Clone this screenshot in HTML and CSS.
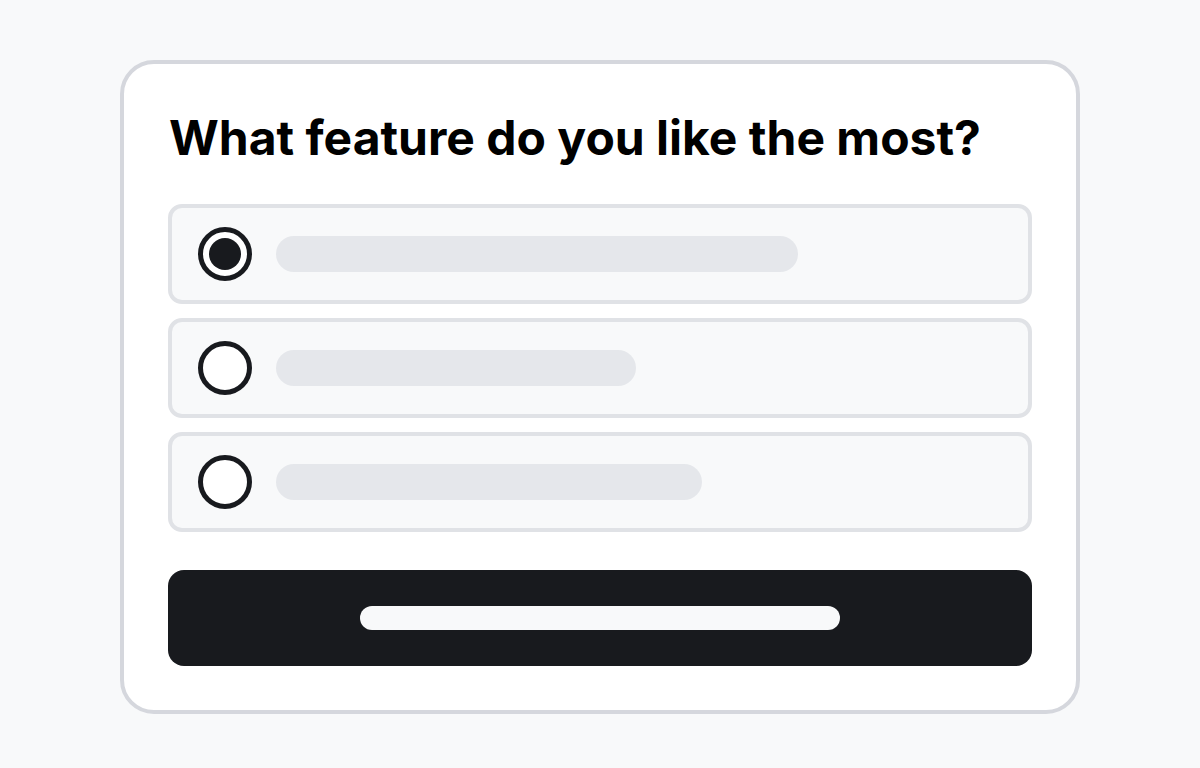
FILE: index.html
```html
<!DOCTYPE html>
<html lang="en">
<head>
<meta charset="utf-8">
<title>Poll</title>
<link rel="stylesheet" href="styles.css">
</head>
<body>
  <main class="card">
    <h1 class="title">What feature do you like the most?</h1>
    <div class="options">
      <div class="option">
        <span class="radio radio--checked"></span>
        <span class="bar" style="width: 522px"></span>
      </div>
      <div class="option">
        <span class="radio"></span>
        <span class="bar" style="width: 360px"></span>
      </div>
      <div class="option">
        <span class="radio"></span>
        <span class="bar" style="width: 426px"></span>
      </div>
    </div>
    <button class="submit" type="button"><span class="submit-bar"></span></button>
  </main>
</body>
</html>
```

FILE: styles.css
```css
* {
  box-sizing: border-box;
}

html, body {
  margin: 0;
  padding: 0;
}

body {
  width: 1200px;
  height: 768px;
  background: #f8f9fa;
  padding: 60px 120px 54px;
  font-family: Inter, "Noto Sans", "Liberation Sans", sans-serif;
}

.card {
  width: 960px;
  height: 654px;
  background: #ffffff;
  border: 4px solid #d5d7dd;
  border-radius: 34px;
  padding: 44px;
  display: flex;
  flex-direction: column;
}

.title {
  margin: 2px 0 38px 1px;
  font-size: 48px;
  line-height: 56px;
  font-weight: 700;
  color: #000000;
  letter-spacing: 0;
}

.options {
  display: flex;
  flex-direction: column;
  gap: 14px;
}

.option {
  height: 100px;
  background: #f8f9fa;
  border: 4px solid #e0e2e6;
  border-radius: 14px;
  display: flex;
  align-items: center;
  padding-left: 26px;
  gap: 24px;
}

.radio {
  width: 54px;
  height: 54px;
  border-radius: 50%;
  border: 5px solid #181a1e;
  background: #ffffff;
  flex: none;
  display: flex;
  align-items: center;
  justify-content: center;
}

.radio--checked::after {
  content: "";
  width: 32px;
  height: 32px;
  border-radius: 50%;
  background: #181a1e;
}

.bar {
  height: 36px;
  border-radius: 18px;
  background: #e5e7eb;
  flex: none;
}

.submit {
  margin-top: 38px;
  height: 96px;
  width: 100%;
  background: #181a1e;
  border: none;
  border-radius: 16px;
  padding: 0;
  display: flex;
  align-items: center;
  justify-content: center;
  cursor: pointer;
}

.submit-bar {
  width: 480px;
  height: 24px;
  border-radius: 12px;
  background: #f8f9fa;
}
```
